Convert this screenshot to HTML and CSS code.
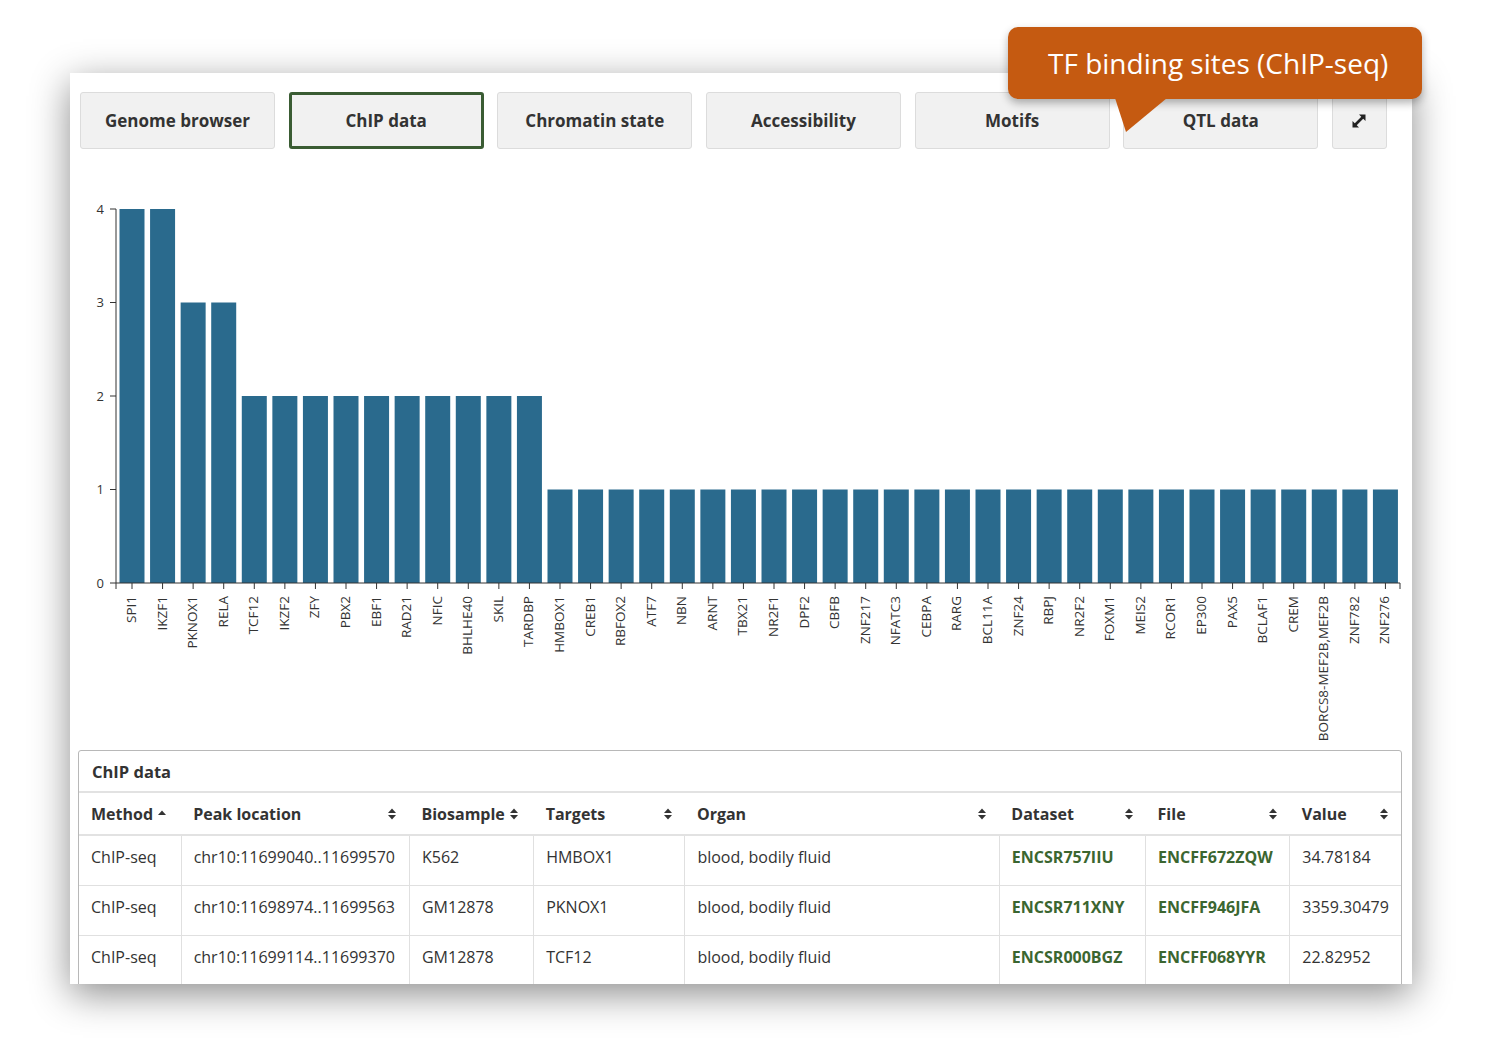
FILE: index.html
```html
<!DOCTYPE html>
<html>
<head>
<meta charset="utf-8">
<link rel="stylesheet" href="styles.css">
</head>
<body>
<div class="panel">
  <div class="tabs">
    <button class="tab">Genome browser</button>
    <button class="tab active">ChIP data</button>
    <button class="tab">Chromatin state</button>
    <button class="tab">Accessibility</button>
    <button class="tab">Motifs</button>
    <button class="tab">QTL data</button>
    <button class="tab expand" aria-label="expand">
      <svg width="18" height="18" viewBox="0 0 18 18">
        <path d="M5 13 L13 5" stroke="#222" stroke-width="2.6"/>
        <polygon points="9,2.5 15.5,2.5 15.5,9" fill="#222"/>
        <polygon points="2.5,9 2.5,15.5 9,15.5" fill="#222"/>
      </svg>
    </button>
  </div>

  <svg class="chart" width="1342" height="601" viewBox="70 149 1342 601">
    <g class="yaxis">
      <line x1="116" y1="209" x2="116" y2="583"/>
      <line x1="110" y1="209" x2="116" y2="209"/>
      <line x1="110" y1="302.5" x2="116" y2="302.5"/>
      <line x1="110" y1="396" x2="116" y2="396"/>
      <line x1="110" y1="489.5" x2="116" y2="489.5"/>
      <line x1="110" y1="583" x2="116" y2="583"/>
      <text x="104" y="209" dy="0.35em">4</text>
      <text x="104" y="302.5" dy="0.35em">3</text>
      <text x="104" y="396" dy="0.35em">2</text>
      <text x="104" y="489.5" dy="0.35em">1</text>
      <text x="104" y="583" dy="0.35em">0</text>
    </g>
    <g class="bars">
      <rect x="119.5" y="209" width="25" height="374"/>
      <rect x="150.07" y="209" width="25" height="374"/>
      <rect x="180.64" y="302.5" width="25" height="280.5"/>
      <rect x="211.21" y="302.5" width="25" height="280.5"/>
      <rect x="241.79" y="396" width="25" height="187"/>
      <rect x="272.36" y="396" width="25" height="187"/>
      <rect x="302.93" y="396" width="25" height="187"/>
      <rect x="333.5" y="396" width="25" height="187"/>
      <rect x="364.07" y="396" width="25" height="187"/>
      <rect x="394.64" y="396" width="25" height="187"/>
      <rect x="425.21" y="396" width="25" height="187"/>
      <rect x="455.79" y="396" width="25" height="187"/>
      <rect x="486.36" y="396" width="25" height="187"/>
      <rect x="516.93" y="396" width="25" height="187"/>
      <rect x="547.5" y="489.5" width="25" height="93.5"/>
      <rect x="578.07" y="489.5" width="25" height="93.5"/>
      <rect x="608.64" y="489.5" width="25" height="93.5"/>
      <rect x="639.21" y="489.5" width="25" height="93.5"/>
      <rect x="669.79" y="489.5" width="25" height="93.5"/>
      <rect x="700.36" y="489.5" width="25" height="93.5"/>
      <rect x="730.93" y="489.5" width="25" height="93.5"/>
      <rect x="761.5" y="489.5" width="25" height="93.5"/>
      <rect x="792.07" y="489.5" width="25" height="93.5"/>
      <rect x="822.64" y="489.5" width="25" height="93.5"/>
      <rect x="853.21" y="489.5" width="25" height="93.5"/>
      <rect x="883.79" y="489.5" width="25" height="93.5"/>
      <rect x="914.36" y="489.5" width="25" height="93.5"/>
      <rect x="944.93" y="489.5" width="25" height="93.5"/>
      <rect x="975.5" y="489.5" width="25" height="93.5"/>
      <rect x="1006.07" y="489.5" width="25" height="93.5"/>
      <rect x="1036.64" y="489.5" width="25" height="93.5"/>
      <rect x="1067.21" y="489.5" width="25" height="93.5"/>
      <rect x="1097.79" y="489.5" width="25" height="93.5"/>
      <rect x="1128.36" y="489.5" width="25" height="93.5"/>
      <rect x="1158.93" y="489.5" width="25" height="93.5"/>
      <rect x="1189.5" y="489.5" width="25" height="93.5"/>
      <rect x="1220.07" y="489.5" width="25" height="93.5"/>
      <rect x="1250.64" y="489.5" width="25" height="93.5"/>
      <rect x="1281.21" y="489.5" width="25" height="93.5"/>
      <rect x="1311.79" y="489.5" width="25" height="93.5"/>
      <rect x="1342.36" y="489.5" width="25" height="93.5"/>
      <rect x="1372.93" y="489.5" width="25" height="93.5"/>
    </g>
    <g class="xaxis">
      <path d="M116 589 V583 H1400 V589"/>
      <path d="M132 583 v6 M162.57 583 v6 M193.14 583 v6 M223.71 583 v6 M254.29 583 v6 M284.86 583 v6 M315.43 583 v6 M346 583 v6 M376.57 583 v6 M407.14 583 v6 M437.71 583 v6 M468.29 583 v6 M498.86 583 v6 M529.43 583 v6 M560 583 v6 M590.57 583 v6 M621.14 583 v6 M651.71 583 v6 M682.29 583 v6 M712.86 583 v6 M743.43 583 v6 M774 583 v6 M804.57 583 v6 M835.14 583 v6 M865.71 583 v6 M896.29 583 v6 M926.86 583 v6 M957.43 583 v6 M988 583 v6 M1018.57 583 v6 M1049.14 583 v6 M1079.71 583 v6 M1110.29 583 v6 M1140.86 583 v6 M1171.43 583 v6 M1202 583 v6 M1232.57 583 v6 M1263.14 583 v6 M1293.71 583 v6 M1324.29 583 v6 M1354.86 583 v6 M1385.43 583 v6"/>
      <text transform="translate(131,596) rotate(-90)">SPI1</text>
      <text transform="translate(161.57,596) rotate(-90)">IKZF1</text>
      <text transform="translate(192.14,596) rotate(-90)">PKNOX1</text>
      <text transform="translate(222.71,596) rotate(-90)">RELA</text>
      <text transform="translate(253.29,596) rotate(-90)">TCF12</text>
      <text transform="translate(283.86,596) rotate(-90)">IKZF2</text>
      <text transform="translate(314.43,596) rotate(-90)">ZFY</text>
      <text transform="translate(345,596) rotate(-90)">PBX2</text>
      <text transform="translate(375.57,596) rotate(-90)">EBF1</text>
      <text transform="translate(406.14,596) rotate(-90)">RAD21</text>
      <text transform="translate(436.71,596) rotate(-90)">NFIC</text>
      <text transform="translate(467.29,596) rotate(-90)">BHLHE40</text>
      <text transform="translate(497.86,596) rotate(-90)">SKIL</text>
      <text transform="translate(528.43,596) rotate(-90)">TARDBP</text>
      <text transform="translate(559,596) rotate(-90)">HMBOX1</text>
      <text transform="translate(589.57,596) rotate(-90)">CREB1</text>
      <text transform="translate(620.14,596) rotate(-90)">RBFOX2</text>
      <text transform="translate(650.71,596) rotate(-90)">ATF7</text>
      <text transform="translate(681.29,596) rotate(-90)">NBN</text>
      <text transform="translate(711.86,596) rotate(-90)">ARNT</text>
      <text transform="translate(742.43,596) rotate(-90)">TBX21</text>
      <text transform="translate(773,596) rotate(-90)">NR2F1</text>
      <text transform="translate(803.57,596) rotate(-90)">DPF2</text>
      <text transform="translate(834.14,596) rotate(-90)">CBFB</text>
      <text transform="translate(864.71,596) rotate(-90)">ZNF217</text>
      <text transform="translate(895.29,596) rotate(-90)">NFATC3</text>
      <text transform="translate(925.86,596) rotate(-90)">CEBPA</text>
      <text transform="translate(956.43,596) rotate(-90)">RARG</text>
      <text transform="translate(987,596) rotate(-90)">BCL11A</text>
      <text transform="translate(1017.57,596) rotate(-90)">ZNF24</text>
      <text transform="translate(1048.14,596) rotate(-90)">RBPJ</text>
      <text transform="translate(1078.71,596) rotate(-90)">NR2F2</text>
      <text transform="translate(1109.29,596) rotate(-90)">FOXM1</text>
      <text transform="translate(1139.86,596) rotate(-90)">MEIS2</text>
      <text transform="translate(1170.43,596) rotate(-90)">RCOR1</text>
      <text transform="translate(1201,596) rotate(-90)">EP300</text>
      <text transform="translate(1231.57,596) rotate(-90)">PAX5</text>
      <text transform="translate(1262.14,596) rotate(-90)">BCLAF1</text>
      <text transform="translate(1292.71,596) rotate(-90)">CREM</text>
      <text transform="translate(1323.29,596) rotate(-90)">BORCS8-MEF2B,MEF2B</text>
      <text transform="translate(1353.86,596) rotate(-90)">ZNF782</text>
      <text transform="translate(1384.43,596) rotate(-90)">ZNF276</text>
    </g>
  </svg>

  <div class="data-panel">
    <div class="data-title">ChIP data</div>
    <table class="data-table">
      <colgroup>
        <col class="c-method"><col class="c-peak"><col class="c-bio"><col class="c-targets"><col class="c-organ"><col class="c-dataset"><col class="c-file"><col class="c-value">
      </colgroup>
      <thead>
        <tr>
          <th><span class="th-inline">Method <svg class="sort" width="10" height="12" viewBox="0 0 10 12"><polygon points="1,7 9,7 5,2.5" fill="#333"/></svg></span></th>
          <th><div class="th-flex">Peak location <svg class="sort" width="10" height="14" viewBox="0 0 10 14"><polygon points="1,6 9,6 5,1.5" fill="#333"/><polygon points="1,8 9,8 5,12.5" fill="#333"/></svg></div></th>
          <th><span class="th-inline">Biosample <svg class="sort" width="10" height="14" viewBox="0 0 10 14"><polygon points="1,6 9,6 5,1.5" fill="#333"/><polygon points="1,8 9,8 5,12.5" fill="#333"/></svg></span></th>
          <th><div class="th-flex">Targets <svg class="sort" width="10" height="14" viewBox="0 0 10 14"><polygon points="1,6 9,6 5,1.5" fill="#333"/><polygon points="1,8 9,8 5,12.5" fill="#333"/></svg></div></th>
          <th><div class="th-flex">Organ <svg class="sort" width="10" height="14" viewBox="0 0 10 14"><polygon points="1,6 9,6 5,1.5" fill="#333"/><polygon points="1,8 9,8 5,12.5" fill="#333"/></svg></div></th>
          <th><div class="th-flex">Dataset <svg class="sort" width="10" height="14" viewBox="0 0 10 14"><polygon points="1,6 9,6 5,1.5" fill="#333"/><polygon points="1,8 9,8 5,12.5" fill="#333"/></svg></div></th>
          <th><div class="th-flex">File <svg class="sort" width="10" height="14" viewBox="0 0 10 14"><polygon points="1,6 9,6 5,1.5" fill="#333"/><polygon points="1,8 9,8 5,12.5" fill="#333"/></svg></div></th>
          <th><div class="th-flex">Value <svg class="sort" width="10" height="14" viewBox="0 0 10 14"><polygon points="1,6 9,6 5,1.5" fill="#333"/><polygon points="1,8 9,8 5,12.5" fill="#333"/></svg></div></th>
        </tr>
      </thead>
      <tbody>
        <tr>
          <td>ChIP-seq</td><td>chr10:11699040..11699570</td><td>K562</td><td>HMBOX1</td><td>blood, bodily fluid</td>
          <td><a class="link">ENCSR757IIU</a></td><td><a class="link">ENCFF672ZQW</a></td><td>34.78184</td>
        </tr>
        <tr>
          <td>ChIP-seq</td><td>chr10:11698974..11699563</td><td>GM12878</td><td>PKNOX1</td><td>blood, bodily fluid</td>
          <td><a class="link">ENCSR711XNY</a></td><td><a class="link">ENCFF946JFA</a></td><td>3359.30479</td>
        </tr>
        <tr>
          <td>ChIP-seq</td><td>chr10:11699114..11699370</td><td>GM12878</td><td>TCF12</td><td>blood, bodily fluid</td>
          <td><a class="link">ENCSR000BGZ</a></td><td><a class="link">ENCFF068YYR</a></td><td>22.82952</td>
        </tr>
      </tbody>
    </table>
  </div>
</div>

<div class="callout">
  <span class="callout-text">TF binding sites (ChIP-seq)</span>
  <svg class="callout-tail" width="60" height="36" viewBox="0 0 60 36"><polygon points="0,0 52,0 11,34" fill="#c55a11"/></svg>
</div>
</body>
</html>
```

FILE: styles.css
```css
html, body {
  margin: 0;
  padding: 0;
  background: #fff;
}

body {
  font-family: "Open Sans", "Liberation Sans", sans-serif;
  color: #333;
  position: relative;
  width: 1485px;
  height: 1054px;
  overflow: hidden;
}

.panel {
  margin: 73px 0 0 70px;
  width: 1342px;
  height: 911px;
  box-sizing: border-box;
  padding: 19px 0 0 10px;
  background: #fff;
  overflow: hidden;
  box-shadow: 0 10px 36px rgba(0, 0, 0, 0.45);
}

.tabs {
  display: flex;
  gap: 13.67px;
}

.tab {
  width: 195px;
  height: 57px;
  flex: none;
  box-sizing: border-box;
  background: #f1f1f1;
  border: 1px solid #dcdcdc;
  border-radius: 3px;
  font-family: "Open Sans", "Liberation Sans", sans-serif;
  font-weight: 700;
  font-size: 17px;
  color: #333;
  padding: 0;
  display: flex;
  align-items: center;
  justify-content: center;
}

.tab.active {
  border: 3px solid #3a5c33;
}

.tab.expand {
  width: 55px;
}

.chart {
  display: block;
  margin-left: -10px;
}

.yaxis line, .xaxis path {
  stroke: #333;
  stroke-width: 1;
  fill: none;
}

.yaxis text {
  font-family: "Open Sans", "Liberation Sans", sans-serif;
  font-size: 13px;
  fill: #333;
  text-anchor: end;
}

.xaxis text {
  font-family: "Open Sans", "Liberation Sans", sans-serif;
  font-size: 13.5px;
  fill: #333;
  text-anchor: end;
  dominant-baseline: central;
}

.bars rect {
  fill: #2a6a8d;
}

.data-panel {
  margin-left: -2px;
  width: 1322px;
  border: 1px solid #b8b8b8;
  border-radius: 3px;
  background: #fff;
}

.data-title {
  height: 42px;
  box-sizing: border-box;
  padding: 0 13px;
  display: flex;
  align-items: center;
  font-weight: 700;
  font-size: 16.5px;
  border-bottom: 2px solid #e2e2e2;
}

.data-table {
  width: 100%;
  border-collapse: collapse;
  table-layout: fixed;
  font-size: 16px;
}

.c-method { width: 102px; }
.c-peak { width: 228px; }
.c-bio { width: 124px; }
.c-targets { width: 151px; }
.c-organ { width: 314px; }
.c-dataset { width: 146px; }
.c-file { width: 144px; }
.c-value { width: 111px; }

.data-table th {
  height: 41px;
  padding: 0 12px;
  text-align: left;
  font-weight: 700;
  font-size: 16px;
  border-bottom: 2px solid #e2e2e2;
  white-space: nowrap;
}

.th-flex {
  display: flex;
  align-items: center;
  justify-content: space-between;
}

.th-inline {
  display: inline-flex;
  align-items: center;
  gap: 4px;
}

.sort {
  flex: none;
}

.data-table td {
  height: 50px;
  box-sizing: border-box;
  padding: 10px 12px 0;
  vertical-align: top;
  line-height: 22px;
  border-left: 1px solid #e0e0e0;
  border-bottom: 1px solid #e0e0e0;
  white-space: nowrap;
  overflow: hidden;
}

.data-table td:first-child {
  border-left: none;
}

.link {
  color: #3b6630;
  font-weight: 700;
  text-decoration: none;
}

.callout {
  position: absolute;
  left: 1008px;
  top: 27px;
  width: 414px;
  height: 72px;
  box-sizing: border-box;
  padding-left: 40px;
  background: #c55a11;
  border-radius: 10px;
  box-shadow: 0 4px 8px rgba(0, 0, 0, 0.3);
  display: flex;
  align-items: center;
}

.callout-text {
  color: #fff;
  font-size: 28px;
  font-family: "Open Sans", "Liberation Sans", sans-serif;
}

.callout-tail {
  position: absolute;
  left: 107px;
  top: 71px;
}
```
